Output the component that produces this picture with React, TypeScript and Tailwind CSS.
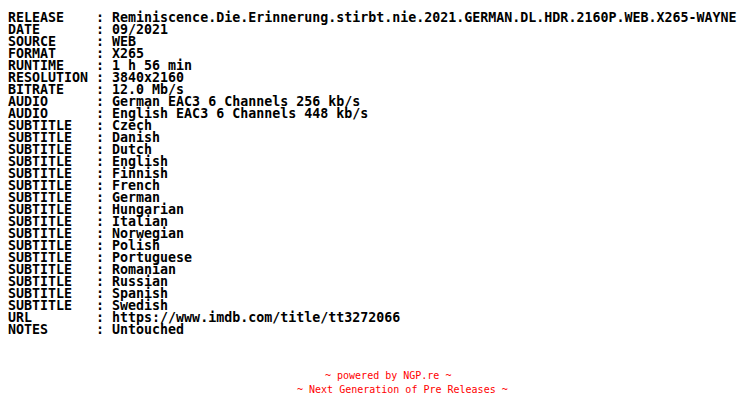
import React from "react";

const rows: [string, string][] = [
  ["RELEASE", "Reminiscence.Die.Erinnerung.stirbt.nie.2021.GERMAN.DL.HDR.2160P.WEB.X265-WAYNE"],
  ["DATE", "09/2021"],
  ["SOURCE", "WEB"],
  ["FORMAT", "X265"],
  ["RUNTIME", "1 h 56 min"],
  ["RESOLUTION", "3840x2160"],
  ["BITRATE", "12.0 Mb/s"],
  ["AUDIO", "German EAC3 6 Channels 256 kb/s"],
  ["AUDIO", "English EAC3 6 Channels 448 kb/s"],
  ["SUBTITLE", "Czech"],
  ["SUBTITLE", "Danish"],
  ["SUBTITLE", "Dutch"],
  ["SUBTITLE", "English"],
  ["SUBTITLE", "Finnish"],
  ["SUBTITLE", "French"],
  ["SUBTITLE", "German"],
  ["SUBTITLE", "Hungarian"],
  ["SUBTITLE", "Italian"],
  ["SUBTITLE", "Norwegian"],
  ["SUBTITLE", "Polish"],
  ["SUBTITLE", "Portuguese"],
  ["SUBTITLE", "Romanian"],
  ["SUBTITLE", "Russian"],
  ["SUBTITLE", "Spanish"],
  ["SUBTITLE", "Swedish"],
  ["URL", "https://www.imdb.com/title/tt3272066"],
  ["NOTES", "Untouched"],
];

export default function App() {
  return (
    <div className="w-[744px] h-[420px] bg-white overflow-hidden">
      <div
        className="pt-[12px] pl-[8px] text-black font-bold text-[13.3px] leading-[12px] whitespace-pre"
        style={{ fontFamily: '"DejaVu Sans Mono", "Liberation Mono", monospace' }}
      >
        {rows.map(([k, v], i) => (
          <div key={i} className="h-[12px]">
            {k.padEnd(11, " ") + ": " + v}
          </div>
        ))}
      </div>
      <div
        className="mt-[33px] pl-[297px] text-[#ff0000] text-[10px] leading-[14px] whitespace-pre"
        style={{ fontFamily: '"DejaVu Sans Mono", "Liberation Mono", monospace' }}
      >
        <div className="pl-[28px]">~ powered by NGP.re ~</div>
        <div>~ Next Generation of Pre Releases ~</div>
      </div>
    </div>
  );
}
